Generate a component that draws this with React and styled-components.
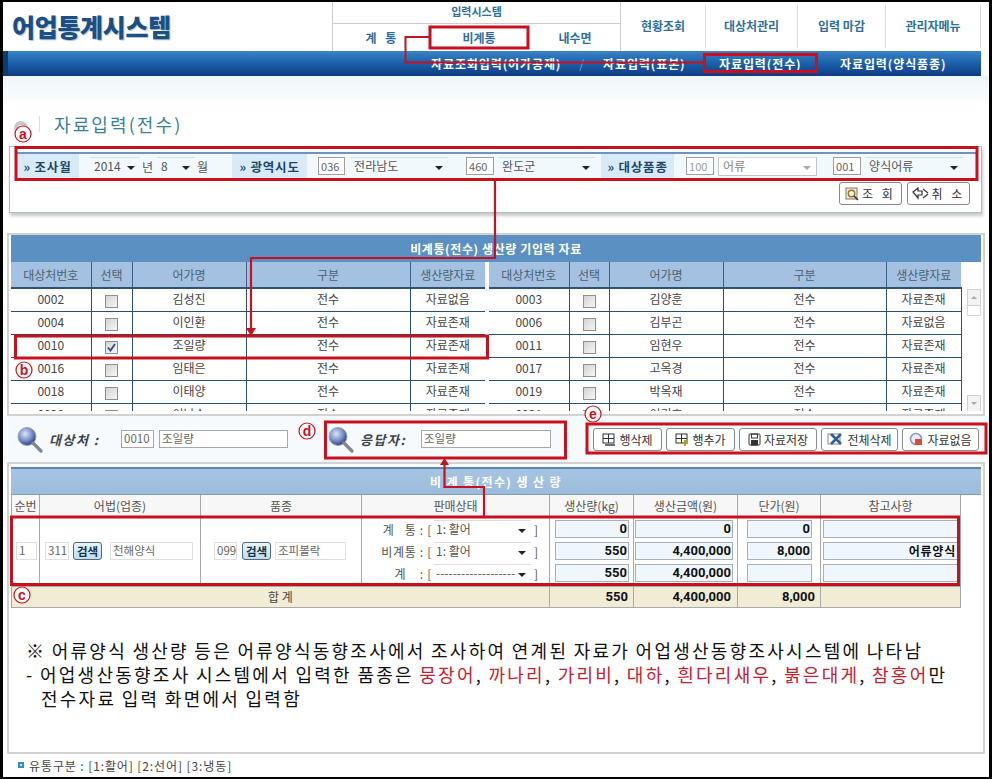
import React from "react";
import styled, { createGlobalStyle } from "styled-components";

const FONT = `"Noto Sans CJK KR", "Noto Sans", sans-serif`;

const Global = createGlobalStyle`
  html, body { margin: 0; padding: 0; background: #fff; }
  body { font-family: ${FONT}; }
  * { box-sizing: border-box; }
`;

const Frame = styled.div`
  position: relative;
  width: 992px;
  height: 779px;
  border-style: solid;
  border-color: #000;
  border-width: 2px 3px 2px 3px;
  background: #fff;
  overflow: hidden;
  color: #444;
  font-size: 12px;
`;

/* ---------- header ---------- */
const Header = styled.header`
  display: flex;
  height: 49px;
`;
const Logo = styled.div`
  width: 329px;
  padding: 7px 0 0 9px;
  font-size: 25px;
  line-height: 34px;
  font-weight: 900;
  letter-spacing: -0.3px;
  color: #1d4f80;
  text-shadow: 1px 1px 1px #a9c4dc;
  white-space: nowrap;
`;
const InputMenu = styled.div`
  width: 288px;
  display: flex;
  flex-direction: column;
  border-left: 1px solid #ccc;
`;
const InputTitle = styled.div`
  height: 22px;
  border-bottom: 1px solid #ccc;
  text-align: center;
  font-size: 11px;
  line-height: 18px;
  font-weight: 700;
  color: #2f6f9e;
`;
const SubMenus = styled.div`
  flex: 1;
  display: grid;
  grid-template-columns: 96px 100px 92px;
`;
const SubMenu = styled.div`
  display: flex;
  align-items: center;
  justify-content: center;
  font-size: 12px;
  font-weight: 700;
  color: #2f6f9e;
  word-spacing: 6px;
`;
const TopMenus = styled.div`
  display: grid;
  grid-template-columns: 85px 92px 88px 95px;
  border-left: 1px solid #ccc;
`;
const TopMenu = styled.div`
  display: flex;
  align-items: center;
  justify-content: center;
  padding-bottom: 3px;
  font-size: 12px;
  font-weight: 700;
  color: #2f6f9e;
  border-right: 1px solid #ddd;
  margin: 3px 0;
`;

const NavBar = styled.nav`
  display: grid;
  grid-template-columns: 423px 172px 116px 121px auto;
  align-items: center;
  height: 25px;
  margin-right: 8px;
  background: linear-gradient(#3a84c6 0%, #1d63ad 45%, #0e3c82 100%);
  border-left: 5px solid #123a6e;
  color: #fff;
  font-size: 12px;
  font-weight: 700;
  letter-spacing: 0.9px;
  white-space: nowrap;
`;
const Slash = styled.span`
  margin-left: 18px;
  color: #7fa6d4;
  font-weight: 400;
`;

const TitleBand = styled.div`
  height: 29px;
  background: linear-gradient(#eff6fb, #f7fbfd 70%, #ffffff);
`;
const TitleRow = styled.div`
  height: 41px;
  display: flex;
  align-items: center;
  padding-left: 11px;
  padding-bottom: 4px;
`;
const TitleDot = styled.span`
  width: 14px;
  height: 14px;
  border-radius: 50%;
  border: 4px solid #c8c8c8;
  background: #eee;
  margin-top: 8px;
`;
const TitleBar = styled.span`
  width: 1px;
  height: 16px;
  background: #ddd;
  margin: 0 14px 0 11px;
`;
const Title = styled.h1`
  margin: 0;
  font-size: 18px;
  line-height: 24px;
  font-weight: 400;
  letter-spacing: 2.1px;
  color: #3b7f9b;
`;

/* ---------- search ---------- */
const SearchPanel = styled.section`
  margin: 0 7px 0 6px;
  height: 67px;
  border: 1px solid #a5bfcc;
  box-shadow: 1px 3px 3px #c9c9c9;
  padding: 5px 4px 0 6px;
`;
const SearchRow = styled.div`
  display: flex;
  align-items: center;
  height: 26px;
  border-top: 2px solid #6e94bd;
  background: #f2f9fd;
`;
const SearchLabel = styled.div`
  width: ${(p) => p.$w}px;
  align-self: stretch;
  flex: none;
  display: flex;
  align-items: center;
  justify-content: center;
  background: #d9eaf7;
  color: #1c4668;
  font-size: 12.5px;
  font-weight: 700;
  letter-spacing: 0.8px;
`;
const Gap = styled.span`
  width: ${(p) => p.$w}px;
  flex: none;
`;
const SmallBox = styled.span`
  flex: none;
  width: ${(p) => p.$w}px;
  height: 18px;
  border: 1px solid #a0a0a0;
  background: #fff;
  font-size: 11px;
  line-height: 16px;
  padding-left: 2px;
  color: ${(p) => (p.$dim ? "#999" : "#666")};
`;
const FakeSelect = styled.span`
  flex: none;
  position: relative;
  display: block;
  width: ${(p) => p.$w}px;
  height: ${(p) => p.$h || 19}px;
  padding-left: ${(p) => p.$pad ?? 4}px;
  font-size: 12px;
  line-height: 16px;
  color: ${(p) => (p.$dim ? "#888" : "#555")};
  background: ${(p) => (p.$boxed ? "#fff" : "transparent")};
  border: ${(p) => (p.$boxed ? "1px solid #c4c4c4" : "none")};
  border-top: 1px solid #ddd;
  white-space: nowrap;
  overflow: hidden;
  &::after {
    content: "";
    position: absolute;
    right: 5px;
    top: 8px;
    border-left: 4px solid transparent;
    border-right: 4px solid transparent;
    border-top: 4px solid ${(p) => (p.$dim ? "#aaa" : "#222")};
  }
`;
const Unit = styled.span`
  flex: none;
  font-size: 12px;
  color: #555;
  margin-left: 2px;
`;
const SearchActions = styled.div`
  display: flex;
  justify-content: flex-end;
  gap: 5px;
  margin-top: 4px;
  padding-right: 7px;
`;
const ActionButton = styled.button`
  display: flex;
  align-items: center;
  justify-content: center;
  gap: 3px;
  width: ${(p) => p.$w}px;
  height: ${(p) => p.$h || 23}px;
  padding: 0;
  background: #fff;
  border: 1px solid #8a8a8a;
  border-radius: 3px;
  font-family: ${FONT};
  font-size: 12px;
  letter-spacing: ${(p) => p.$ls || 0}px;
  color: #333;
  white-space: nowrap;
`;

/* ---------- panels ---------- */
const Panel = styled.section`
  margin: ${(p) => p.$top || 0}px 4px 0 4px;
  height: ${(p) => p.$h}px;
  border: 2px solid #d2d2d2;
  padding: ${(p) => p.$padTop ?? 0}px 2px 0 2px;
  overflow: hidden;
`;
const GridBar = styled.div`
  height: 27px;
  background: #5a90c2;
  color: #fff;
  text-align: center;
  font-size: 12px;
  line-height: 27px;
  font-weight: 700;
  letter-spacing: 0.6px;
`;
const GridBody = styled.div`
  display: flex;
  height: 149px;
  overflow: hidden;
  align-items: flex-start;
`;
const ListTable = styled.table`
  table-layout: fixed;
  flex: none;
  width: ${(p) => p.$w}px;
  margin-right: ${(p) => p.$mr}px;
  border-collapse: collapse;
  font-size: 12px;
  color: #444;
  th {
    height: 26px;
    padding: 0;
    font-weight: 400;
    font-size: 12px;
    color: #4d5f70;
    background: #a4c1e1;
    border-right: 1px solid #3c6186;
    border-bottom: 2px solid #2d5273;
  }
  th:last-child { border-right: none; }
  td {
    height: 23px;
    padding: 0 0 2px;
    text-align: center;
    border-right: 1px solid #2c4f6f;
    border-bottom: 1px solid #2c4f6f;
    background: #fff;
  }
  td:last-child { border-right: ${(p) => (p.$closed ? "1px solid #2c4f6f" : "none")}; }
`;
const Check = styled.span`
  display: inline-flex;
  align-items: center;
  justify-content: center;
  width: 13px;
  height: 13px;
  margin-top: 4px;
  vertical-align: middle;
  border: 1px solid #8f8f8f;
  background: linear-gradient(135deg, #d4d4d4, #f6f6f6);
`;
const Scroll = styled.div`
  flex: none;
  display: flex;
  flex-direction: column;
  width: 14px;
  height: 123px;
  margin-top: 27px;
`;
const ScrollBtn = styled.span`
  flex: none;
  height: 17px;
  border: 1px solid #d0d0d0;
  background: #f3f3f3;
  display: flex;
  align-items: center;
  justify-content: center;
  &::after {
    content: "";
    border-left: 3px solid transparent;
    border-right: 3px solid transparent;
    ${(p) => (p.$down ? "border-top" : "border-bottom")}: 3px solid #aaa;
  }
`;
const ScrollThumb = styled.span`
  flex: none;
  height: 10px;
  border: 1px solid #d8d8d8;
  border-top: none;
`;
const ScrollRest = styled.span`
  flex: 1;
`;

/* ---------- info row ---------- */
const InfoRow = styled.div`
  display: flex;
  align-items: center;
  height: 46px;
  padding-left: 13px;
  background: #f6fafc;
`;
const InfoGroup = styled.div`
  display: flex;
  align-items: center;
  flex: none;
  width: ${(p) => p.$w}px;
`;
const InfoLabel = styled.span`
  flex: none;
  width: ${(p) => p.$w}px;
  margin-left: 6px;
  font-size: 13px;
  font-weight: 700;
  font-style: italic;
  letter-spacing: 1.5px;
  color: #3a4450;
  white-space: nowrap;
`;
const TextBox = styled.span`
  flex: none;
  display: block;
  width: ${(p) => p.$w}px;
  height: ${(p) => p.$h || 18}px;
  margin-right: ${(p) => p.$mr || 0}px;
  border: 1px solid ${(p) => p.$line || "#a8a8a8"};
  background: #fff;
  padding-left: 2px;
  font-size: 11.5px;
  line-height: 15px;
  color: #666;
  white-space: nowrap;
  overflow: hidden;
`;
const ActionRow = styled.div`
  display: flex;
  gap: 4px;
`;

/* ---------- production table ---------- */
const ProdBar = styled.div`
  height: 28px;
  border-top: 2px solid #5c87ad;
  background: linear-gradient(#a6c4e2, #9dbcdc);
  color: #fff;
  text-align: center;
  font-size: 12px;
  line-height: 26px;
  font-weight: 700;
  letter-spacing: 1.4px;
  border-bottom: 1px solid #7d9db9;
`;
const ProdTable = styled.table`
  table-layout: fixed;
  width: 949px;
  border-collapse: collapse;
  font-size: 12px;
  color: #555;
  th {
    height: 21px;
    padding: 0;
    font-weight: 400;
    font-size: 12px;
    color: #555;
    background: #f7f7f7;
    border: 1px solid #a9a9a9;
    border-top: none;
  }
  td {
    padding: 0;
    height: 70px;
    border: 1px solid #a9a9a9;
    vertical-align: middle;
  }
`;
const CodeCell = styled.div`
  display: flex;
  align-items: center;
  padding-left: ${(p) => p.$pad}px;
`;
const SearchBtn = styled.button`
  flex: none;
  width: 29px;
  height: 18px;
  margin-right: ${(p) => p.$mr}px;
  padding: 0;
  background: linear-gradient(#e8f4fb, #bfdcee);
  border: 1px solid #51697c;
  border-radius: 3px;
  font-family: ${FONT};
  font-size: 11.5px;
  font-weight: 700;
  line-height: 14px;
  color: #17324a;
`;
const StatusStack = styled.div`
  display: flex;
  flex-direction: column;
  gap: 2px;
`;
const StatusRow = styled.div`
  display: flex;
  align-items: center;
  height: 20px;
`;
const StatusLabel = styled.span`
  flex: none;
  width: 72px;
  text-align: right;
  padding-right: 2px;
  white-space: pre;
  letter-spacing: 0.7px;
  color: #555;
`;
const Bracket = styled.span`
  flex: none;
  margin-left: 3px;
  color: #555;
`;
const NumStack = styled.div`
  display: flex;
  flex-direction: column;
  gap: 4px;
  padding-left: ${(p) => p.$l}px;
  padding-right: ${(p) => p.$r}px;
`;
const NumBox = styled.span`
  display: block;
  height: 18px;
  border: 1px solid #a8b0b6;
  background: #eff6fc;
  text-align: right;
  padding-right: 1px;
  font-family: Roboto, sans-serif;
  font-size: 13px;
  font-weight: 700;
  line-height: 16px;
  color: #111;
`;
const NoteBox = styled(NumBox)`
  font-family: ${FONT};
  font-size: 12px;
  letter-spacing: 0.8px;
  line-height: 15px;
`;
const TotalRow = styled.tr`
  td {
    height: 21px;
    background: #f0ecd6;
    text-align: center;
    color: #444;
  }
`;
const TotalNum = styled.td`
  && {
    text-align: right;
    padding-right: ${(p) => p.$r}px;
    font-family: Roboto, sans-serif;
    font-size: 13px;
    font-weight: 700;
    color: #111;
  }
`;

const Notes = styled.div`
  margin: 30px 0 0 15px;
  font-size: 18px;
  line-height: 24px;
  letter-spacing: 2.25px;
  word-spacing: -0.8px;
  color: #111;
  white-space: nowrap;
`;
const NoteIndent = styled.div`
  padding-left: 15px;
`;
const Red = styled.span`
  color: #c4202f;
`;
const Legend = styled.footer`
  display: flex;
  align-items: center;
  gap: 5px;
  height: 22px;
  padding: 0 0 0 15px;
  font-size: 12px;
  letter-spacing: 0.9px;
  color: #444;
`;
const LegendMark = styled.span`
  width: 6px;
  height: 6px;
  border: 2px solid #2f8fbe;
  background: #cfe7f3;
`;

const OverlaySvg = styled.svg`
  position: absolute;
  left: -3px;
  top: -2px;
  pointer-events: none;
`;
const MarkText = styled.text`
  font-family: "Liberation Sans", sans-serif;
  font-size: 14px;
  font-weight: 700;
  fill: #c8101e;
  text-anchor: middle;
`;

/* ---------- drawings ---------- */
const Magnifier = () => (
  <svg width="27" height="27" viewBox="0 0 27 27" style={{ flex: "none" }}>
    <defs>
      <radialGradient id="mg" cx="0.4" cy="0.35" r="0.7">
        <stop offset="0" stopColor="#dbe6f5" />
        <stop offset="0.6" stopColor="#6f86c4" />
        <stop offset="1" stopColor="#1f2f78" />
      </radialGradient>
    </defs>
    <circle cx="11" cy="10.5" r="9" fill="url(#mg)" stroke="#9aa5b5" />
    <path d="M17 17 L25 25" stroke="#7d8793" strokeWidth="3.2" strokeLinecap="round" />
  </svg>
);
const SearchIco = () => (
  <svg width="14" height="14" viewBox="0 0 14 14">
    <rect x="1" y="1" width="11" height="11" fill="#f5f0d0" stroke="#777" />
    <circle cx="6.5" cy="6.5" r="3.2" fill="#fff" stroke="#a86b10" strokeWidth="1.4" />
    <path d="M9 9 L13 13" stroke="#333" strokeWidth="1.6" />
  </svg>
);
const CancelIco = () => (
  <svg width="17" height="13" viewBox="0 0 17 13" fill="none" stroke="#333" strokeWidth="1.2">
    <path d="M1 5 L6 1 V4 H10 V8 H6 V11 Z" />
    <path d="M16 7 L11 11 M11 2 L16 6" />
  </svg>
);
const GridIco = ({ plus }) => (
  <svg width="14" height="13" viewBox="0 0 14 13" fill="none">
    <rect x="1" y="1" width="11" height="9" stroke="#333" />
    <path d="M1 5.5 H12 M6.5 1 V10" stroke="#333" />
    {plus ? (
      <path d="M10 7 V13 M7 10 H13" stroke="#b5a21a" strokeWidth="2.2" />
    ) : (
      <path d="M3 12 H13" stroke="#333" strokeWidth="1.4" />
    )}
  </svg>
);
const SaveIco = () => (
  <svg width="13" height="13" viewBox="0 0 13 13" fill="none" stroke="#333">
    <rect x="1" y="1" width="11" height="11" rx="1" />
    <rect x="3.5" y="1" width="6" height="4" />
    <rect x="3.5" y="7.5" width="6" height="4.5" fill="#333" />
  </svg>
);
const ClearIco = () => (
  <svg width="17" height="14" viewBox="0 0 17 14" fill="none">
    <rect x="1" y="2" width="12" height="10" stroke="#888" />
    <path d="M4 2 L14 12 M14 2 L4 12" stroke="#2f5f96" strokeWidth="2.6" />
  </svg>
);
const NoDataIco = () => (
  <svg width="15" height="15" viewBox="0 0 15 15" fill="none">
    <circle cx="7" cy="7" r="5.5" stroke="#8a9ac0" strokeWidth="1.6" fill="#eef" />
    <rect x="6" y="7" width="7" height="6" fill="#d2503a" />
  </svg>
);
const CheckMark = () => (
  <svg width="11" height="11" viewBox="0 0 11 11" fill="none">
    <path d="M2 5.5 L4.5 8.5 L9 2" stroke="#2f4a78" strokeWidth="1.8" />
  </svg>
);

const R = "#c8101e";
const Overlay = () => (
  <OverlaySvg width="992" height="779" viewBox="0 0 992 779" fill="none" stroke={R} strokeWidth="3">
    <rect x="430" y="27" width="98" height="21" />
    <rect x="704.5" y="54.5" width="112" height="17" />
    <path d="M430 37 H405.5 V62.5 H704" strokeWidth="2" />
    <rect x="16" y="147.5" width="961" height="32" />
    <path d="M495 180 V258 H251 V330" strokeWidth="2.2" />
    <path d="M246 328 H256 L251 336 Z" fill={R} stroke="none" />
    <rect x="15.5" y="336" width="472" height="22" />
    <rect x="325.5" y="422" width="240" height="36" />
    <rect x="587" y="424" width="399" height="29" />
    <rect x="11.5" y="517" width="947" height="67.5" />
    <path d="M484 516 V487 H444.5 V464" strokeWidth="2.2" />
    <path d="M440 465 H449 L444.5 458 Z" fill={R} stroke="none" />
    <g strokeWidth="1.2" fill="#fff">
      <circle cx="23" cy="134" r="8" />
      <circle cx="24" cy="370" r="8" />
      <circle cx="22" cy="595" r="8" />
      <circle cx="307" cy="431" r="8" />
      <circle cx="593" cy="414" r="8" />
    </g>
    <g stroke="none">
      <MarkText x="23" y="139">a</MarkText>
      <MarkText x="24" y="375">b</MarkText>
      <MarkText x="22" y="600">c</MarkText>
      <MarkText x="307" y="436">d</MarkText>
      <MarkText x="593" y="419">e</MarkText>
    </g>
  </OverlaySvg>
);

const LEFT = [
  ["0002", "김성진", "자료없음"],
  ["0004", "이인환", "자료존재"],
  ["0010", "조일량", "자료존재", true],
  ["0016", "임태은", "자료존재"],
  ["0018", "이태양", "자료존재"],
  ["0020", "이남수", "자료존재"],
];
const RIGHT = [
  ["0003", "김양훈", "자료존재"],
  ["0006", "김부곤", "자료없음"],
  ["0011", "임현우", "자료존재"],
  ["0017", "고옥경", "자료존재"],
  ["0019", "박옥재", "자료존재"],
  ["0021", "이기호", "자료존재"],
];

const List = ({ rows, cols, w, mr, closed }) => (
  <ListTable $w={w} $mr={mr} $closed={closed}>
    <colgroup>
      {cols.map((c, i) => (
        <col key={i} width={c} />
      ))}
    </colgroup>
    <thead>
      <tr>
        <th>대상처번호</th>
        <th>선택</th>
        <th>어가명</th>
        <th>구분</th>
        <th>생산량자료</th>
      </tr>
    </thead>
    <tbody>
      {rows.map(([id, name, st, on]) => (
        <tr key={id}>
          <td>{id}</td>
          <td>
            <Check>{on && <CheckMark />}</Check>
          </td>
          <td>{name}</td>
          <td>전수</td>
          <td>{st}</td>
        </tr>
      ))}
    </tbody>
  </ListTable>
);

export default function App() {
  return (
    <Frame>
      <Global />
      <Header>
        <Logo>어업통계시스템</Logo>
        <InputMenu>
          <InputTitle>입력시스템</InputTitle>
          <SubMenus>
            <SubMenu>계 통</SubMenu>
            <SubMenu>비계통</SubMenu>
            <SubMenu>내수면</SubMenu>
          </SubMenus>
        </InputMenu>
        <TopMenus>
          <TopMenu>현황조회</TopMenu>
          <TopMenu>대상처관리</TopMenu>
          <TopMenu>입력 마감</TopMenu>
          <TopMenu>관리자메뉴</TopMenu>
        </TopMenus>
      </Header>
      <NavBar>
        <span />
        <span>
          자료조회입력(어가공제)<Slash>/</Slash>
        </span>
        <span>자료입력(표본)</span>
        <span>자료입력(전수)</span>
        <span>자료입력(양식품종)</span>
      </NavBar>
      <TitleBand />
      <TitleRow>
        <TitleDot />
        <TitleBar />
        <Title>자료입력(전수)</Title>
      </TitleRow>

      <SearchPanel>
        <SearchRow>
          <SearchLabel $w={63}>» 조사월</SearchLabel>
          <Gap $w={11} />
          <FakeSelect $w={50}>2014</FakeSelect>
          <Unit>년</Unit>
          <Gap $w={4} />
          <FakeSelect $w={38}>8</FakeSelect>
          <Unit>월</Unit>
          <Gap $w={24} />
          <SearchLabel $w={75}>» 광역시도</SearchLabel>
          <Gap $w={11} />
          <SmallBox $w={27}>036</SmallBox>
          <Gap $w={5} />
          <FakeSelect $w={98}>전라남도</FakeSelect>
          <Gap $w={18} />
          <SmallBox $w={28}>460</SmallBox>
          <Gap $w={4} />
          <FakeSelect $w={97}>완도군</FakeSelect>
          <Gap $w={6} />
          <SearchLabel $w={73}>» 대상품종</SearchLabel>
          <Gap $w={12} />
          <SmallBox $w={28} $dim>100</SmallBox>
          <Gap $w={4} />
          <FakeSelect $w={99} $dim $boxed>어류</FakeSelect>
          <Gap $w={16} />
          <SmallBox $w={28}>001</SmallBox>
          <Gap $w={4} />
          <FakeSelect $w={98}>양식어류</FakeSelect>
        </SearchRow>
        <SearchActions>
          <ActionButton $w={63} $ls={3}>
            <SearchIco />조 회
          </ActionButton>
          <ActionButton $w={63} $ls={3}>
            <CancelIco />취 소
          </ActionButton>
        </SearchActions>
      </SearchPanel>

      <Panel $top={20} $h={183}>
        <GridBar>비계통(전수) 생산량 기입력 자료</GridBar>
        <GridBody>
          <List rows={LEFT} cols={[80, 41, 114, 164, 75]} w={474} mr={4} />
          <List rows={RIGHT} cols={[80, 40, 114, 163, 75]} w={472} mr={5} closed />
          <Scroll>
            <ScrollBtn />
            <ScrollThumb />
            <ScrollRest />
            <ScrollBtn $down />
          </Scroll>
        </GridBody>
      </Panel>

      <InfoRow>
        <InfoGroup $w={311}>
          <Magnifier />
          <InfoLabel $w={72}>대상처 :</InfoLabel>
          <TextBox $w={33} $mr={5}>0010</TextBox>
          <TextBox $w={129}>조일량</TextBox>
        </InfoGroup>
        <InfoGroup $w={266}>
          <Magnifier />
          <InfoLabel $w={61}>응답자:</InfoLabel>
          <TextBox $w={130}>조일량</TextBox>
        </InfoGroup>
        <ActionRow>
          <ActionButton $w={69}><GridIco />행삭제</ActionButton>
          <ActionButton $w={69}><GridIco plus />행추가</ActionButton>
          <ActionButton $w={78}><SaveIco />자료저장</ActionButton>
          <ActionButton $w={77}><ClearIco />전체삭제</ActionButton>
          <ActionButton $w={77}><NoDataIco />자료없음</ActionButton>
        </ActionRow>
      </InfoRow>

      <Panel $h={292} $padTop={3}>
        <ProdBar>비 계 통(전수) 생 산 량</ProdBar>
        <ProdTable>
          <colgroup>
            {[28, 161, 161, 188, 84, 104, 83, 140].map((c, i) => (
              <col key={i} width={c} />
            ))}
          </colgroup>
          <thead>
            <tr>
              <th>순번</th>
              <th>어법(업종)</th>
              <th>품종</th>
              <th>판매상태</th>
              <th>생산량(kg)</th>
              <th>생산금액(원)</th>
              <th>단가(원)</th>
              <th>참고사항</th>
            </tr>
          </thead>
          <tbody>
            <tr>
              <td>
                <CodeCell $pad={4}>
                  <TextBox $w={21} $line="#e0e0e0">1</TextBox>
                </CodeCell>
              </td>
              <td>
                <CodeCell $pad={5}>
                  <TextBox $w={24} $mr={4} $line="#e0e0e0">311</TextBox>
                  <SearchBtn $mr={8}>검색</SearchBtn>
                  <TextBox $w={83} $line="#e0e0e0">천해양식</TextBox>
                </CodeCell>
              </td>
              <td>
                <CodeCell $pad={13}>
                  <TextBox $w={23} $mr={5} $line="#e0e0e0">099</TextBox>
                  <SearchBtn $mr={4}>검색</SearchBtn>
                  <TextBox $w={71} $line="#e0e0e0">조피볼락</TextBox>
                </CodeCell>
              </td>
              <td>
                <StatusStack>
                  <StatusRow>
                    <StatusLabel>{"계   통 : ["}</StatusLabel>
                    <FakeSelect $w={97} $h={18} $pad={2}>1: 활어</FakeSelect>
                    <Bracket>]</Bracket>
                  </StatusRow>
                  <StatusRow>
                    <StatusLabel>비계통 : [</StatusLabel>
                    <FakeSelect $w={97} $h={18} $pad={2}>1: 활어</FakeSelect>
                    <Bracket>]</Bracket>
                  </StatusRow>
                  <StatusRow>
                    <StatusLabel>{"계    : ["}</StatusLabel>
                    <FakeSelect $w={97} $h={18} $pad={2}>-------------------</FakeSelect>
                    <Bracket>]</Bracket>
                  </StatusRow>
                </StatusStack>
              </td>
              <td>
                <NumStack $l={5} $r={4}>
                  <NumBox>0</NumBox>
                  <NumBox>550</NumBox>
                  <NumBox>550</NumBox>
                </NumStack>
              </td>
              <td>
                <NumStack $l={1} $r={4}>
                  <NumBox>0</NumBox>
                  <NumBox>4,400,000</NumBox>
                  <NumBox>4,400,000</NumBox>
                </NumStack>
              </td>
              <td>
                <NumStack $l={9} $r={8}>
                  <NumBox>0</NumBox>
                  <NumBox>8,000</NumBox>
                  <NumBox />
                </NumStack>
              </td>
              <td>
                <NumStack $l={2} $r={2}>
                  <NumBox />
                  <NoteBox>어류양식</NoteBox>
                  <NumBox />
                </NumStack>
              </td>
            </tr>
            <TotalRow>
              <td colSpan={4}>합 계</td>
              <TotalNum $r={5}>550</TotalNum>
              <TotalNum $r={6}>4,400,000</TotalNum>
              <TotalNum $r={5}>8,000</TotalNum>
              <td />
            </TotalRow>
          </tbody>
        </ProdTable>
        <Notes>
          <div>※ 어류양식 생산량 등은 어류양식동향조사에서 조사하여 연계된 자료가 어업생산동향조사시스템에 나타남</div>
          <div>
            - 어업생산동향조사 시스템에서 입력한 품종은 <Red>뭉장어</Red>, <Red>까나리</Red>, <Red>가리비</Red>, <Red>대하</Red>, <Red>흰다리새우</Red>, <Red>붉은대게</Red>, <Red>참홍어</Red>만
          </div>
          <NoteIndent>전수자료 입력 화면에서 입력함</NoteIndent>
        </Notes>
      </Panel>
      <Legend>
        <LegendMark />
        유통구분 : [1:활어] [2:선어] [3:냉동]
      </Legend>
      <Overlay />
    </Frame>
  );
}
